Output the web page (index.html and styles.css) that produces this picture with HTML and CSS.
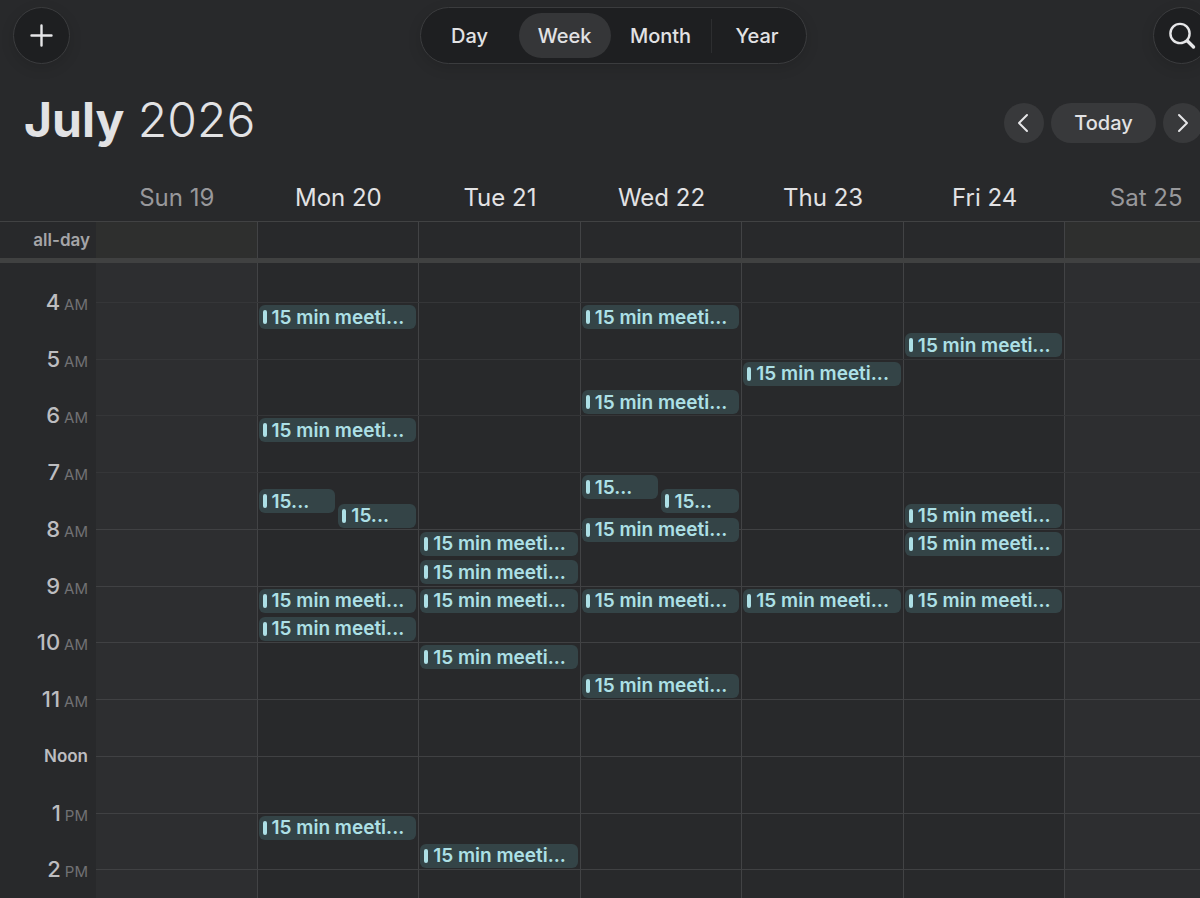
FILE: index.html
```
<!DOCTYPE html>
<html lang="en">
<head>
    <meta charset="UTF-8">
    <meta name="viewport" content="width=device-width, initial-scale=1.0">
    <title>Calendar</title>
    <link rel="stylesheet" href="styles.css">
</head>
<body>
<div class="calendar">
    <header class="toolbar">
        <button class="round-btn" aria-label="New event">
            <svg width="24" height="24" viewBox="0 0 24 24"><path d="M11.5 1.5v20M1.5 11.5h20"/></svg>
        </button>
        <nav class="views">
            <button class="view">Day</button>
            <button class="view active">Week</button>
            <button class="view wide">Month</button>
            <button class="view last">Year</button>
        </nav>
        <button class="round-btn" aria-label="Search">
            <svg width="28" height="28" viewBox="0 0 28 28"><circle cx="12" cy="11.5" r="9.6"/><path class="handle" d="M19.5 19l6 6"/></svg>
        </button>
    </header>

    <div class="heading">
        <h1 class="month"><b>July</b> 2026</h1>
        <div class="pager">
            <button class="page-btn" aria-label="Previous week">
                <svg width="14" height="20" viewBox="0 0 14 20"><path d="M10 2L2 10l8 8"/></svg>
            </button>
            <button class="today">Today</button>
            <button class="page-btn" aria-label="Next week">
                <svg width="12" height="20" viewBox="0 0 12 20"><path d="M2 2l8 8-8 8"/></svg>
            </button>
        </div>
    </div>

    <div class="week day-names">
        <span class="corner"></span>
        <span class="name off">Sun 19</span>
        <span class="name">Mon 20</span>
        <span class="name">Tue 21</span>
        <span class="name">Wed 22</span>
        <span class="name">Thu 23</span>
        <span class="name">Fri 24</span>
        <span class="name off">Sat 25</span>
    </div>

    <div class="week all-day">
        <span class="label">all-day</span>
        <div class="cell off"></div>
        <div class="cell"></div>
        <div class="cell"></div>
        <div class="cell"></div>
        <div class="cell"></div>
        <div class="cell"></div>
        <div class="cell off"></div>
    </div>

    <main class="timeline">
        <div class="hours">
            <div class="hour">4<small>AM</small></div>
            <div class="hour">5<small>AM</small></div>
            <div class="hour">6<small>AM</small></div>
            <div class="hour">7<small>AM</small></div>
            <div class="hour">8<small>AM</small></div>
            <div class="hour">9<small>AM</small></div>
            <div class="hour">10<small>AM</small></div>
            <div class="hour">11<small>AM</small></div>
            <div class="hour noon">Noon</div>
            <div class="hour">1<small>PM</small></div>
            <div class="hour">2<small>PM</small></div>
        </div>

        <!-- grid-row is the quarter hour the event starts in, counted from 4 AM -->
        <div class="days">
            <section class="day off"></section>
            <section class="day">
                <div class="event" style="grid-row: 1 / span 2">15 min meeti...</div>
                <div class="event" style="grid-row: 9 / span 2">15 min meeti...</div>
                <div class="event left" style="grid-row: 14 / span 2">15...</div>
                <div class="event right" style="grid-row: 15 / span 2">15...</div>
                <div class="event" style="grid-row: 21 / span 2">15 min meeti...</div>
                <div class="event" style="grid-row: 23 / span 2">15 min meeti...</div>
                <div class="event" style="grid-row: 37 / span 2">15 min meeti...</div>
            </section>
            <section class="day">
                <div class="event" style="grid-row: 17 / span 2">15 min meeti...</div>
                <div class="event" style="grid-row: 19 / span 2">15 min meeti...</div>
                <div class="event" style="grid-row: 21 / span 2">15 min meeti...</div>
                <div class="event" style="grid-row: 25 / span 2">15 min meeti...</div>
                <div class="event" style="grid-row: 39 / span 2">15 min meeti...</div>
            </section>
            <section class="day">
                <div class="event" style="grid-row: 1 / span 2">15 min meeti...</div>
                <div class="event" style="grid-row: 7 / span 2">15 min meeti...</div>
                <div class="event left" style="grid-row: 13 / span 2">15...</div>
                <div class="event right" style="grid-row: 14 / span 2">15...</div>
                <div class="event" style="grid-row: 16 / span 2">15 min meeti...</div>
                <div class="event" style="grid-row: 21 / span 2">15 min meeti...</div>
                <div class="event" style="grid-row: 27 / span 2">15 min meeti...</div>
            </section>
            <section class="day">
                <div class="event" style="grid-row: 5 / span 2">15 min meeti...</div>
                <div class="event" style="grid-row: 21 / span 2">15 min meeti...</div>
            </section>
            <section class="day">
                <div class="event" style="grid-row: 3 / span 2">15 min meeti...</div>
                <div class="event" style="grid-row: 15 / span 2">15 min meeti...</div>
                <div class="event" style="grid-row: 17 / span 2">15 min meeti...</div>
                <div class="event" style="grid-row: 21 / span 2">15 min meeti...</div>
            </section>
            <section class="day off"></section>
        </div>

        <div class="lines">
            <i class="early"></i><i class="early"></i><i class="early"></i><i class="early"></i>
            <i></i><i></i><i></i><i></i><i></i><i></i><i></i>
        </div>
    </main>
</div>
</body>
</html>
```
FILE: styles.css
```
*{
    box-sizing: border-box;
}
body{
    margin: 0;
    background-color: #28292b;
    color: #e2e2e4;
    font-family: Inter, "Liberation Sans", sans-serif;
    overflow: hidden;
}
button{
    font-family: inherit;
    color: inherit;
    border: none;
    padding: 0;
    background-color: transparent;
}
svg{
    display: block;
    fill: none;
    stroke: #e6e6e8;
    stroke-width: 2.4;
    stroke-linecap: round;
    stroke-linejoin: round;
}
/* the window runs a little past the right edge of the screen */
.calendar{
    width: calc(100% + 27px);
    height: 100vh;
    overflow: hidden;
}
.toolbar{
    display: flex;
    justify-content: space-between;
    align-items: center;
    padding: 7px 17px 0 13px;
}
.round-btn{
    display: flex;
    align-items: center;
    justify-content: center;
    width: 57px;
    height: 57px;
    border: 1px solid #3b3c3e;
    border-radius: 50%;
    background-color: #1e1f21;
    box-shadow: 0 4px 14px rgba(0,0,0,0.12);
}
.handle{
    stroke-width: 3.4;
}
.views{
    display: flex;
    align-items: center;
    gap: 3px;
    height: 57px;
    margin-left: 3px;
    padding: 0 3px;
    border: 1px solid #3b3c3e;
    border-radius: 29px;
    background-color: #1e1f21;
    box-shadow: 0 4px 14px rgba(0,0,0,0.12);
}
.view{
    width: 92px;
    height: 45px;
    border-radius: 23px;
    font-size: 20px;
    font-weight: 500;
}
.view.active{
    background-color: #353638;
}
.view.wide{
    width: 94px;
}
.view.last{
    height: 34px;
    border-left: 1px solid #2d2e30;
    border-radius: 0;
}
.heading{
    display: flex;
    justify-content: space-between;
    align-items: center;
    height: 108px;
    padding: 10px 24px 0 24px;
}
.month{
    margin: 0;
    padding-bottom: 6px;
    font-size: 48px;
    line-height: 60px;
    font-weight: 300;
}
.month b{
    font-weight: 700;
}
.pager{
    display: flex;
    gap: 7px;
}
.page-btn{
    display: flex;
    align-items: center;
    justify-content: center;
    width: 40px;
    height: 40px;
    border-radius: 50%;
    background-color: #38393b;
}
.page-btn svg{
    stroke-width: 2;
}
.today{
    width: 105px;
    height: 40px;
    border-radius: 20px;
    background-color: #38393b;
    font-size: 20px;
    font-weight: 500;
}
.week{
    display: grid;
    grid-template-columns: 96px repeat(7, minmax(0, 1fr));
}
.day-names{
    height: 49px;
    padding-top: 2px;
    align-items: center;
}
.name{
    text-align: center;
    font-size: 24px;
    line-height: 30px;
}
.name.off{
    color: #98989b;
}
.all-day{
    height: 42px;
    border-top: 1px solid #414243;
    border-bottom: 5px solid #404141;
}
.label{
    padding-right: 6px;
    text-align: right;
    font-size: 17px;
    line-height: 36px;
    font-weight: 600;
    color: #a5a5a8;
}
.cell, .day{
    border-right: 1px solid #424345;
}
.cell.off{
    background-color: #2e2f2e;
}
.timeline{
    display: grid;
    grid-template-columns: 96px minmax(0, 1fr);
}
.days{
    display: grid;
    grid-template-columns: repeat(7, minmax(0, 1fr));
}
/* lines share the cell of the days and run over them */
.days, .lines{
    grid-column: 2;
    grid-row: 1;
}
.hours, .day, .lines{
    height: 663px;
    padding-top: 39px;
}
.hours, .lines{
    display: flex;
    flex-direction: column;
}
.hour{
    flex: 1;
    padding-right: 8px;
    text-align: right;
    font-size: 22px;
    line-height: 1px;
    font-weight: 500;
    color: #bdbdc0;
}
.hour small{
    margin-left: 4px;
    font-size: 15px;
    font-weight: 400;
    color: #717174;
}
.hour.noon{
    font-size: 17px;
    font-weight: 600;
}
.lines i{
    flex: 1;
    border-top: 1px solid #404143;
}
.lines .early{
    border-color: #353638;
}
.day{
    display: grid;
    grid-template-columns: repeat(2, minmax(0, 1fr));
    grid-template-rows: repeat(44, minmax(0, 1fr));
    padding-left: 1px;
}
.day.off{
    background-color: #2d2e30;
}
.event{
    grid-column: 1 / -1;
    z-index: 1;
    display: flex;
    align-items: center;
    gap: 5px;
    height: 24px;
    margin: 3px 2px 0 0;
    padding: 1px 0 0 4px;
    border-radius: 6px;
    background-color: #344447;
    color: #ade0e6;
    font-size: 19px;
    font-weight: 600;
    line-height: 24px;
    white-space: nowrap;
}
.event::before{
    content: "";
    width: 4px;
    height: 14px;
    margin-bottom: 1px;
    border-radius: 2px;
    background-color: #ade0e6;
}
.event.left{
    grid-column: 1;
    margin-right: 3px;
}
.event.right{
    grid-column: 2;
}
```
